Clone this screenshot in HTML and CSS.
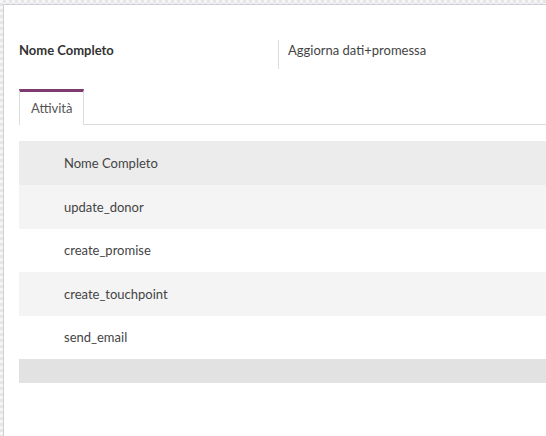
FILE: index.html
```html
<!DOCTYPE html>
<html lang="it">
<head>
<meta charset="utf-8">
<title>Attività</title>
<link rel="stylesheet" href="styles.css">
</head>
<body>
<div class="card">
  <div class="fields">
    <div class="field field-label">Nome Completo</div>
    <div class="field field-value">Aggiorna dati+promessa</div>
  </div>
  <div class="tabs">
    <div class="tab active">Attività</div>
  </div>
  <div class="table">
    <div class="row head">Nome Completo</div>
    <div class="row odd">update_donor</div>
    <div class="row even">create_promise</div>
    <div class="row odd">create_touchpoint</div>
    <div class="row even">send_email</div>
    <div class="foot"></div>
  </div>
</div>
</body>
</html>
```

FILE: styles.css
```css
html, body {
  margin: 0;
  height: 100%;
}
body {
  overflow: hidden;
  font-family: Lato, "Open Sans", sans-serif;
  font-size: 13px;
  color: #3d3d3d;
  background-color: #f2f2f2;
  background-image: repeating-conic-gradient(#e6e6e6 0 25%, #f6f6f6 0 50%);
  background-size: 6px 6px;
}
.card {
  box-sizing: border-box;
  margin: 4px 0 0 3px;
  height: calc(100% - 4px);
  background: #fff;
  border-top: 1px solid #cfcfd8;
  border-left: 1px solid #cfcfd8;
  padding: 35px 0 0 15px;
}
.fields {
  display: flex;
}
.field {
  line-height: 20px;
  padding-bottom: 9px;
}
.field-label {
  width: 259px;
  font-weight: 700;
  color: #333;
}
.field-value {
  border-left: 1px solid #dcdcdc;
  padding-left: 9px;
  color: #444;
}
.tabs {
  display: flex;
  margin-top: 20px;
  border-bottom: 1px solid #dcdcdc;
}
.tab {
  box-sizing: border-box;
  width: 65px;
  height: 36px;
  padding-left: 11px;
  line-height: 32px;
  color: #555;
  background: #fff;
  border: 1px solid #dcdcdc;
  border-top: 3px solid #7d3b72;
  border-bottom: none;
  margin-bottom: -1px;
}
.table {
  margin-top: 16px;
}
.row {
  height: 44px;
  line-height: 44px;
  padding-left: 45px;
  color: #444;
}
.row.even {
  height: 43px;
  line-height: 43px;
}
.row.head {
  background: #ececec;
  color: #444;
}
.row.odd {
  background: #f4f4f4;
}
.foot {
  height: 24px;
  background: #e2e2e2;
}
```
